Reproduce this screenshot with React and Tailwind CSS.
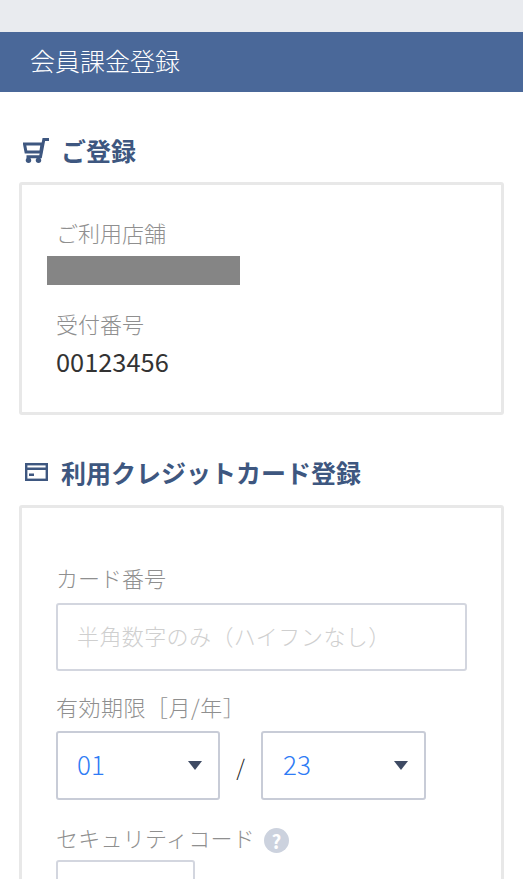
const FONT = "font-['Noto_Sans_CJK_JP','Noto_Sans',sans-serif]";

function CartIcon() {
  return (
    <svg width="26" height="25" viewBox="0 0 26 25" className="block" fill="none" stroke="#3e5780">
      <path d="M26 1.600H20.800L17.500 18.800H3.500" strokeWidth="3" />
      <path d="M1.500 6H19L17.800 14H3z" strokeWidth="3" />
      <circle cx="5.500" cy="22.300" r="2.700" fill="#3e5780" stroke="none" />
      <circle cx="15.500" cy="22.300" r="2.700" fill="#3e5780" stroke="none" />
    </svg>
  );
}

function CardIcon() {
  return (
    <svg width="23" height="18" viewBox="0 0 23 18" className="block" fill="none">
      <rect x="1.200" y="1.200" width="20.600" height="15.600" stroke="#3e5780" strokeWidth="2.400" />
      <rect x="1" y="4.500" width="21" height="2.500" fill="#3e5780" />
      <rect x="4" y="10.500" width="5" height="2.500" fill="#3e5780" />
    </svg>
  );
}

function SectionTitle({ icon, children, className, iconClass }) {
  return (
    <div className={"flex items-center " + className}>
      <span className={"flex w-[42px] " + iconClass}>{icon}</span>
      <h2 className="text-[25px] leading-[32px] font-bold text-[#3e5780]">{children}</h2>
    </div>
  );
}

function Select({ value, className }) {
  return (
    <div className={"flex h-[69px] items-center justify-between rounded-[3px] border-2 border-[#c8ccd7] pr-[16px] " + className}>
      <span className="pb-[4px] text-[26px] leading-none font-light text-[#2f7bf5]">{value}</span>
      <span className="h-0 w-0 border-x-[7px] border-t-[9px] border-x-transparent border-t-[#3e4a63]" />
    </div>
  );
}

export default function App() {
  return (
    <div className={"h-[879px] w-[523px] overflow-hidden bg-white " + FONT}>
      <div className="h-[32px] bg-[#e9ebef]" />
      <header className="flex h-[60px] items-center bg-[#4a6899] pb-[3px] pl-[30px]">
        <h1 className="text-[25px] leading-none font-light text-white">会員課金登録</h1>
      </header>

      <SectionTitle icon={<CartIcon />} iconClass="pl-[4px]" className="mt-[42px] ml-[19px]">ご登録</SectionTitle>

      <section className="mx-[19px] mt-[16px] h-[233px] rounded-[3px] border-[3px] border-[#e8e8e8] pt-[31px] font-light">
        <div className="pl-[34px] text-[22px] leading-[32px] text-[#8f8f8f]">ご利用店舗</div>
        <div className="mt-[8px] ml-[25px] h-[29px] w-[193px] bg-[#858585]" />
        <div className="mt-[22px] pl-[34px] text-[22px] leading-[32px] text-[#8f8f8f]">受付番号</div>
        <div className="mt-[6px] pl-[34px] text-[25.400px] leading-[32px] font-normal text-[#333]">00123456</div>
      </section>

      <SectionTitle icon={<CardIcon />} iconClass="pl-[6px]" className="mt-[41px] ml-[19px]">利用クレジットカード登録</SectionTitle>

      <section className="mx-[19px] mt-[17px] rounded-[3px] border-[3px] border-[#e8e8e8] px-[34px] pt-[53px] pb-[60px] font-light">
        <div className="text-[22px] leading-[32px] text-[#8f8f8f]">カード番号</div>
        <div className="mt-[10px] flex h-[68px] items-center rounded-[3px] border-2 border-[#d3d6df] pb-[3px] pl-[19px] text-[22px] tracking-[0.4px] text-[#cfcfcf]">
          半角数字のみ（ハイフンなし）
        </div>
        <div className="mt-[19px] text-[22px] leading-[32px] tracking-[0.5px] text-[#8f8f8f]">有効期限［月/年］</div>
        <div className="mt-[9px] flex items-center">
          <Select value="01" className="w-[164px] pl-[19px]" />
          <span className="w-[41px] text-center text-[22px] leading-none text-[#222]">/</span>
          <Select value="23" className="w-[165px] pl-[20px]" />
        </div>
        <div className="mt-[21px] flex items-center">
          <span className="text-[22px] leading-[32px] tracking-[0.25px] text-[#8f8f8f]">セキュリティコード</span>
          <span className="mt-[6px] ml-[9px] flex h-[25px] w-[25px] items-center justify-center rounded-full bg-[#ccd2de] text-[19px] leading-none font-bold text-white">?</span>
        </div>
        <div className="mt-[7px] h-[68px] w-[139px] rounded-[3px] border-2 border-[#d3d6df]" />
      </section>
    </div>
  );
}
